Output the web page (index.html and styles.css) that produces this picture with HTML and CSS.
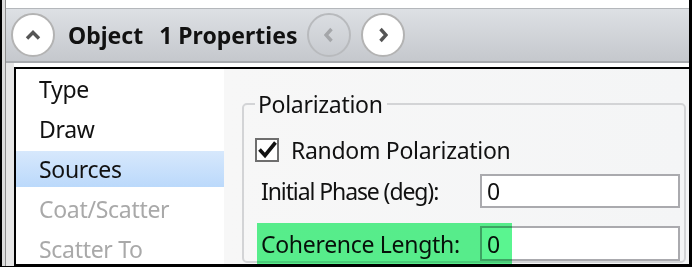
FILE: index.html
```html
<!DOCTYPE html>
<html lang="en">
<head>
    <meta charset="UTF-8">
    <title>Object Properties</title>
    <link rel="stylesheet" href="styles.css">
</head>
<body>
    <div class="window">
        <div class="edge"></div>
        <div class="main">
            <div class="top-strip"></div>
            <div class="toolbar">
                <button class="round">
                    <svg width="16" height="10" viewBox="0 0 16 10"><polyline points="2,8.5 8,2.5 14,8.5" class="chev"/></svg>
                </button>
                <h1 class="title"><span>Object</span><span class="count">1 Properties</span></h1>
                <button class="round disabled">
                    <svg width="10" height="16" viewBox="0 0 10 16"><polyline points="7.5,2 2,8 7.5,14" class="chev"/></svg>
                </button>
                <button class="round">
                    <svg width="10" height="16" viewBox="0 0 10 16"><polyline points="2.5,2 8,8 2.5,14" class="chev"/></svg>
                </button>
            </div>
            <div class="body">
                <div class="gutter"></div>
                <div class="content">
                    <ul class="nav">
                        <li>Type</li>
                        <li>Draw</li>
                        <li class="active">Sources</li>
                        <li class="disabled">Coat/Scatter</li>
                        <li class="disabled">Scatter To</li>
                    </ul>
                    <div class="panel">
                        <fieldset class="group">
                            <legend>Polarization</legend>
                            <label class="check-row">
                                <span class="box">
                                    <svg width="20" height="20" viewBox="0 0 20 20"><polyline points="2.5,9.5 8,15.5 18.5,2.5" class="tick"/></svg>
                                </span>
                                Random Polarization
                            </label>
                            <div class="field">
                                <label class="tight">Initial Phase (deg):</label>
                                <input type="text" value="0">
                            </div>
                            <div class="field tall">
                                <label>Coherence Length:</label>
                                <input type="text" value="0">
                                <span class="highlight"></span>
                            </div>
                        </fieldset>
                    </div>
                </div>
            </div>
        </div>
    </div>
</body>
</html>
```

FILE: styles.css
```css
body {
    margin: 0;
    font-family: "Noto Sans", sans-serif;
    background-color: #fff;
    color: #111;
}
.window {
    display: flex;
    width: 692px;
    height: 267px;
    box-sizing: border-box;
    border-left: 2px solid #000;
    border-right: 3px solid #000;
    border-bottom: 1px solid #000;
    overflow: hidden;
}
.edge {
    width: 3px;
    background-color: #dcdcdc;
    border-right: 1px solid #8e8e8e;
}
.main {
    flex: 1;
    min-width: 0;
    display: flex;
    flex-direction: column;
}
.top-strip {
    height: 8px;
}
.toolbar {
    height: 52px;
    display: flex;
    align-items: center;
    border-top: 1px solid #b4b7bb;
    border-bottom: 2px solid #a7aaae;
    background: linear-gradient(#dde0e4, #c5c8cd);
}
.round {
    width: 44px;
    height: 44px;
    flex: none;
    padding: 0;
    display: flex;
    align-items: center;
    justify-content: center;
    border: 2px solid #b3b3b3;
    border-radius: 50%;
    background-color: #fff;
}
.round:first-child {
    margin-left: 5px;
}
.round + .round {
    margin-left: 10px;
}
.round .chev {
    fill: none;
    stroke: #555;
    stroke-width: 3.4;
}
.round.disabled {
    background-color: transparent;
    border-color: #b8babd;
}
.round.disabled .chev {
    stroke: #a4a6a9;
}
.title {
    margin: 0 10px 0 13px;
    font-size: 23px;
    font-weight: bold;
    white-space: nowrap;
}
.title .count {
    margin-left: 16px;
}
.body {
    flex: 1;
    display: flex;
    min-height: 0;
}
.gutter {
    width: 8px;
    flex: none;
    background-color: #e6e6e6;
}
.content {
    flex: 1;
    min-width: 0;
    display: flex;
    position: relative;
    margin-top: 4px;
    border: 2px solid #000;
    border-right: none;
    overflow: hidden;
    background-color: #fff;
    font-size: 23px;
    letter-spacing: -0.3px;
}
.nav {
    width: 208px;
    flex: none;
    margin: 0;
    padding: 2px 0 0;
    list-style: none;
}
.nav li {
    height: 36px;
    margin-bottom: 4px;
    padding-left: 23px;
    line-height: 36px;
    white-space: nowrap;
}
.nav li.active {
    background: linear-gradient(#d7e8fc, #bbd9fb);
}
.nav li.disabled {
    color: #a9a9a9;
}
.panel {
    flex: 1;
    min-width: 0;
    padding: 22px 3px 0 18px;
    background: linear-gradient(90deg, #f7f7f7, #f4f5f6);
}
.group {
    min-width: 0;
    margin: 0;
    padding: 0 4px 0 11px;
    border: 2px solid #d3d4d6;
    border-radius: 5px;
    display: flex;
    flex-direction: column;
}
.group legend {
    padding: 0 4px 0 3px;
    line-height: 26px;
}
.check-row {
    display: flex;
    align-items: center;
    height: 26px;
    margin-top: 20px;
}
.box {
    width: 24px;
    height: 24px;
    box-sizing: border-box;
    margin-right: 12px;
    display: flex;
    align-items: center;
    justify-content: center;
    border: 2px solid #6e6e6e;
    background-color: #fff;
}
.tick {
    fill: none;
    stroke: #111;
    stroke-width: 3.6;
}
.field {
    display: flex;
    align-items: center;
    margin-top: 11px;
    position: relative;
}
.field label {
    width: 225px;
    flex: none;
    box-sizing: border-box;
    padding-left: 6px;
    white-space: nowrap;
}
.field label.tight {
    letter-spacing: -1.1px;
}
.field input {
    flex: 1 1 0;
    width: 0;
    min-width: 0;
    height: 34px;
    box-sizing: border-box;
    margin: 0;
    padding: 0 5px;
    border: 2px solid #aaaaae;
    font: 23px "Noto Sans", sans-serif;
    color: #111;
    background-color: #fff;
}
.field.tall {
    margin-top: 18px;
}
.field.tall input {
    height: 35px;
}
.highlight {
    position: absolute;
    left: 2px;
    top: -3px;
    width: 255px;
    height: 48px;
    background-color: #5af590;
    mix-blend-mode: multiply;
    pointer-events: none;
}
```
